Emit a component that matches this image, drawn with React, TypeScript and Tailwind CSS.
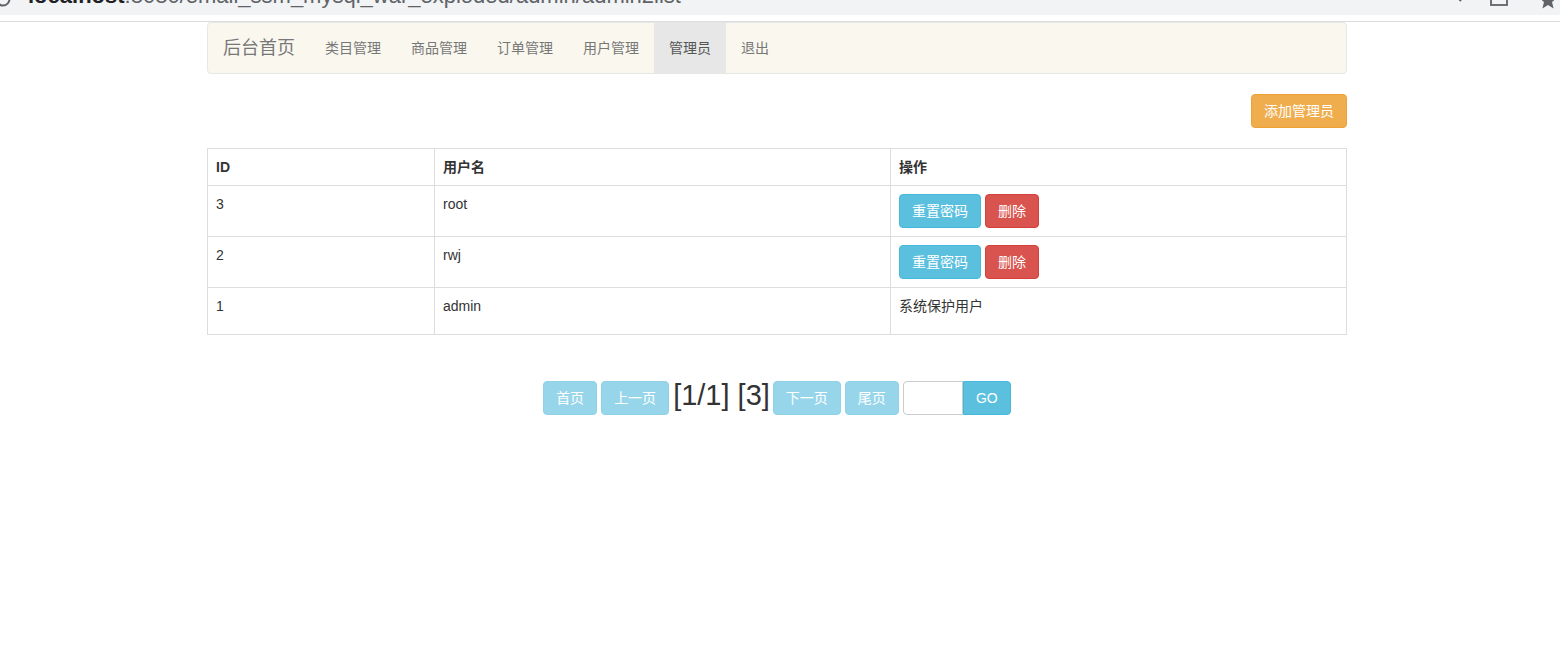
import React from 'react';

const NAV_ITEMS = ['类目管理', '商品管理', '订单管理', '用户管理', '管理员', '退出'];

type Admin = { id: number; name: string; protectedUser?: boolean };

const ADMINS: Admin[] = [
  { id: 3, name: 'root' },
  { id: 2, name: 'rwj' },
  { id: 1, name: 'admin', protectedUser: true },
];

const FONT = 'font-["Liberation_Sans","Noto_Sans_CJK_SC",sans-serif]';

const BrowserStrip: React.FC = () => (
  <div className="relative">
    <div className="relative h-[15px] overflow-hidden bg-[#f1f3f4]">
      <svg className="absolute left-[-6px] top-[-10px]" width="18" height="18" viewBox="0 0 18 18">
        <circle cx="9" cy="9" r="6.5" fill="none" stroke="#5f6368" strokeWidth="2" />
      </svg>
      <div className="absolute left-[28px] top-[-16px] whitespace-nowrap text-[22px] leading-[24px]">
        <span className="font-bold text-[#202124]">localhost</span>
        <span className="text-[#5f6368]">:8080/emall_ssm_mysql_war_exploded/admin/admin2list</span>
      </div>
      <svg className="absolute left-[1452px] top-[-8px]" width="14" height="14" viewBox="0 0 14 14">
        <path d="M3 3 L9 9" stroke="#5f6368" strokeWidth="2" fill="none" />
      </svg>
      <svg className="absolute left-[1489px] top-[-10px]" width="20" height="20" viewBox="0 0 20 20">
        <rect x="2" y="2" width="16" height="13" fill="none" stroke="#5f6368" strokeWidth="1.8" />
      </svg>
      <svg className="absolute left-[1538px] top-[-10px]" width="20" height="20" viewBox="0 0 20 20">
        <path d="M10 1 L12.6 7.4 L19 7.8 L14 12 L15.6 18.5 L10 15 L4.4 18.5 L6 12 L1 7.8 L7.4 7.4 Z" fill="#5f6368" />
      </svg>
    </div>
    <div className="h-[6px] bg-white" />
    <div className="h-px bg-[#dadce0]" />
  </div>
);

const Navbar: React.FC = () => (
  <div className="flex h-[52px] items-stretch rounded-[4px] border border-[#e7e7e7] bg-[#faf7ef]">
    <div className="flex items-center px-[15px] text-[18px] text-[#777]">后台首页</div>
    {NAV_ITEMS.map(item => (
      <div
        key={item}
        className={`flex items-center px-[15px] text-[14px] ${
          item === '管理员' ? 'bg-[#e7e7e7] text-[#555]' : 'text-[#777]'
        }`}
      >
        {item}
      </div>
    ))}
  </div>
);

const AdminTable: React.FC = () => (
  <table className="w-full border-collapse border border-[#ddd] text-[14px] text-[#333]">
    <thead>
      <tr>
        <th className="w-[227px] border border-[#ddd] px-[8px] py-[8px] text-left align-top leading-[20px] font-bold">ID</th>
        <th className="w-[456px] border border-[#ddd] px-[8px] py-[8px] text-left align-top leading-[20px] font-bold">用户名</th>
        <th className="border border-[#ddd] px-[8px] py-[8px] text-left align-top leading-[20px] font-bold">操作</th>
      </tr>
    </thead>
    <tbody>
      {ADMINS.map(admin => (
        <tr key={admin.id} className={admin.protectedUser ? 'h-[47px]' : 'h-[51px]'}>
          <td className="border border-[#ddd] px-[8px] py-[8px] align-top leading-[20px]">{admin.id}</td>
          <td className="border border-[#ddd] px-[8px] py-[8px] align-top leading-[20px]">{admin.name}</td>
          <td className="border border-[#ddd] px-[8px] py-[8px] align-top leading-[20px]">
            {admin.protectedUser ? (
              <div>系统保护用户</div>
            ) : (
              <div className="flex gap-[4px]">
                <button className="h-[34px] rounded-[4px] border border-[#46b8da] bg-[#5bc0de] px-[12px] text-[14px] text-white">
                  重置密码
                </button>
                <button className="h-[34px] rounded-[4px] border border-[#d43f3a] bg-[#d9534f] px-[12px] text-[14px] text-white">
                  删除
                </button>
              </div>
            )}
          </td>
        </tr>
      ))}
    </tbody>
  </table>
);

const Pager: React.FC = () => {
  const dim = 'h-[34px] rounded-[4px] border border-[#8fd2e7] bg-[#97d6ea] px-[12px] text-[14px] text-white';
  return (
    <div className="flex items-start justify-center">
      <button className={`${dim} mr-[4px]`}>首页</button>
      <button className={`${dim} mr-[4px]`}>上一页</button>
      <span className="mr-[3px] mt-[-6px] text-[29px] leading-[40px] text-[#333]">[1/1] [3]</span>
      <button className={`${dim} mr-[4px]`}>下一页</button>
      <button className={`${dim} mr-[4px]`}>尾页</button>
      <input className="h-[34px] w-[60px] rounded-l-[4px] border border-[#ccc] bg-white outline-none" />
      <button className="h-[34px] w-[48px] rounded-r-[4px] border border-[#46b8da] bg-[#5bc0de] text-[14px] text-white">
        GO
      </button>
    </div>
  );
};

export default function App() {
  return (
    <div className={`min-h-[651px] bg-white ${FONT}`}>
      <BrowserStrip />
      <div className="ml-[207px] w-[1140px]">
        <Navbar />
        <div className="mt-[20px] flex justify-end">
          <button className="h-[34px] rounded-[4px] border border-[#eea236] bg-[#f0ad4e] px-[12px] text-[14px] text-white">
            添加管理员
          </button>
        </div>
        <div className="mt-[20px]">
          <AdminTable />
        </div>
        <div className="mt-[46px]">
          <Pager />
        </div>
      </div>
    </div>
  );
}
